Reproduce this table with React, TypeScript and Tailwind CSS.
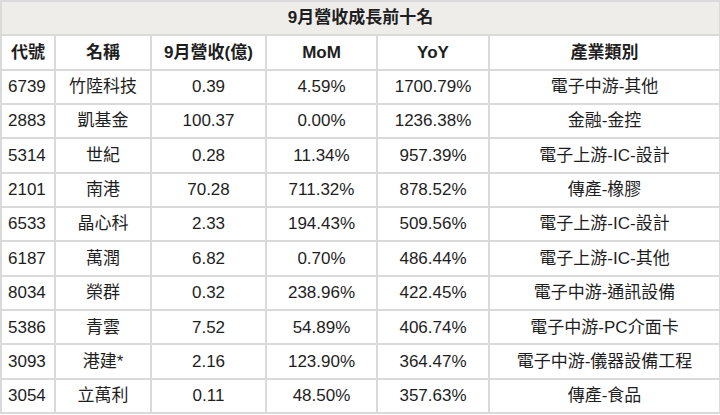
const rows = [
  ["6739", "竹陸科技", "0.39", "4.59%", "1700.79%", "電子中游-其他"],
  ["2883", "凱基金", "100.37", "0.00%", "1236.38%", "金融-金控"],
  ["5314", "世紀", "0.28", "11.34%", "957.39%", "電子上游-IC-設計"],
  ["2101", "南港", "70.28", "711.32%", "878.52%", "傳產-橡膠"],
  ["6533", "晶心科", "2.33", "194.43%", "509.56%", "電子上游-IC-設計"],
  ["6187", "萬潤", "6.82", "0.70%", "486.44%", "電子上游-IC-其他"],
  ["8034", "榮群", "0.32", "238.96%", "422.45%", "電子中游-通訊設備"],
  ["5386", "青雲", "7.52", "54.89%", "406.74%", "電子中游-PC介面卡"],
  ["3093", "港建*", "2.16", "123.90%", "364.47%", "電子中游-儀器設備工程"],
  ["3054", "立萬利", "0.11", "48.50%", "357.63%", "傳產-食品"],
];

const headers = ["代號", "名稱", "9月營收(億)", "MoM", "YoY", "產業類別"];

export default function App() {
  return (
    <div className="w-[720px] h-[415px] bg-white text-[#1e1e1e] text-[17px] font-['Liberation_Sans','Noto_Sans_CJK_TC',sans-serif]">
      <table className="w-[719px] table-fixed border-collapse">
        <colgroup>
          <col className="w-[54px]" />
          <col className="w-[96px]" />
          <col className="w-[115px]" />
          <col className="w-[111px]" />
          <col className="w-[112px]" />
          <col className="w-[231px]" />
        </colgroup>
        <thead>
          <tr className="h-[34.35px] bg-[#efedea]">
            <th colSpan={6} className="border-2 border-[#dadada] p-0 font-bold">9月營收成長前十名</th>
          </tr>
          <tr className="h-[34.35px]">
            {headers.map((h) => (
              <th key={h} className="border-2 border-[#dadada] p-0 font-bold whitespace-nowrap">{h}</th>
            ))}
          </tr>
        </thead>
        <tbody>
          {rows.map((r) => (
            <tr key={r[0]} className="h-[34.35px]">
              {r.map((c, i) => (
                <td
                  key={i}
                  className={`border-2 border-[#dadada] py-0 whitespace-nowrap ${i === 0 ? "text-left pl-[6px] pr-0" : "text-center px-0"}`}
                >
                  {c}
                </td>
              ))}
            </tr>
          ))}
        </tbody>
      </table>
    </div>
  );
}
